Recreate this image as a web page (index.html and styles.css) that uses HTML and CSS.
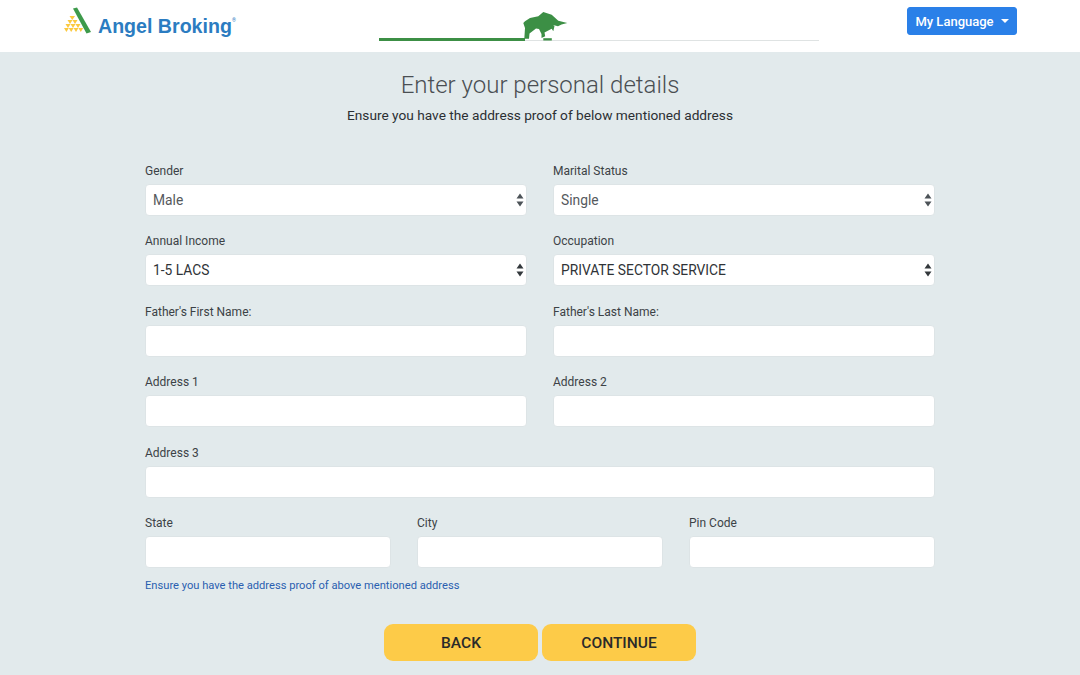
FILE: index.html
```html
<!DOCTYPE html>
<html lang="en">
<head>
<meta charset="utf-8">
<title>Enter your personal details</title>
<link rel="stylesheet" href="styles.css">
</head>
<body>
<header class="topbar">
  <div class="brand">
    <svg class="brand-mark" width="28" height="27" viewBox="0 0 28 27">
      <polygon points="9,1.500 13,0.500 27,25 22.500,26.500" fill="#3d9a4b"/>
      <g fill="#fbc93f">
        <polygon points="5.500,9 11,9 8.250,13"/>
        <polygon points="3.500,13 8.500,13 6,17"/>
        <polygon points="8.500,13 13.500,13 11,17"/>
        <polygon points="1.500,17 6.500,17 4,21"/>
        <polygon points="6.500,17 11.500,17 9,21"/>
        <polygon points="11.500,17 16.500,17 14,21"/>
        <polygon points="0,21 4.800,21 2.400,25"/>
        <polygon points="4.800,21 9.600,21 7.200,25"/>
        <polygon points="9.600,21 14.400,21 12,25"/>
        <polygon points="14.400,21 19.200,21 16.800,25"/>
      </g>
    </svg>
    <span class="brand-name">Angel Broking</span><span class="brand-reg">®</span>
  </div>
  <div class="progress">
    <div class="progress-fill"></div>
    <svg class="bull" width="46" height="30" viewBox="0 0 46 30">
      <path fill="#3c8f45" d="M3 10.300 L1.300 12 L3 17 L2.300 27.700 L7 27.700 L7.500 22.500 L14 17.500 L17 18 L19.500 23 L19.500 27 L23.200 25.300 L22.500 21.500 L29.700 17.700 L31.300 20.300 L32.500 15 L31 14 L36 15.300 L39.500 13.500 L45.300 12 L36.300 9.700 L29.700 3.700 L21.300 1 L16.300 5.300 L8 7 Z"/>
      <rect x="21.300" y="27.200" width="8.500" height="2.300" fill="#3c8f45"/>
    </svg>
  </div>
  <button class="lang-btn" type="button">My Language<span class="caret"></span></button>
</header>

<main class="page">
  <h1 class="title">Enter your personal details</h1>
  <p class="subtitle">Ensure you have the address proof of below mentioned address</p>

  <form class="form">
    <div class="row two">
      <div class="field">
        <label class="label">Gender</label>
        <div class="select-wrap">
          <select class="control select muted"><option>Male</option></select>
          <svg class="arrows" width="8" height="14" viewBox="0 0 8 14"><path d="M4 0.500 L7.500 5.500 H0.500 Z M4 13.500 L0.500 8.500 H7.500 Z" fill="#4d5358"/></svg>
        </div>
      </div>
      <div class="field">
        <label class="label">Marital Status</label>
        <div class="select-wrap">
          <select class="control select muted"><option>Single</option></select>
          <svg class="arrows" width="8" height="14" viewBox="0 0 8 14"><path d="M4 0.500 L7.500 5.500 H0.500 Z M4 13.500 L0.500 8.500 H7.500 Z" fill="#4d5358"/></svg>
        </div>
      </div>
    </div>
    <div class="row two">
      <div class="field">
        <label class="label">Annual Income</label>
        <div class="select-wrap">
          <select class="control select"><option>1-5 LACS</option></select>
          <svg class="arrows" width="8" height="14" viewBox="0 0 8 14"><path d="M4 0.500 L7.500 5.500 H0.500 Z M4 13.500 L0.500 8.500 H7.500 Z" fill="#33383c"/></svg>
        </div>
      </div>
      <div class="field">
        <label class="label">Occupation</label>
        <div class="select-wrap">
          <select class="control select"><option>PRIVATE SECTOR SERVICE</option></select>
          <svg class="arrows" width="8" height="14" viewBox="0 0 8 14"><path d="M4 0.500 L7.500 5.500 H0.500 Z M4 13.500 L0.500 8.500 H7.500 Z" fill="#33383c"/></svg>
        </div>
      </div>
    </div>
    <div class="row two">
      <div class="field"><label class="label">Father's First Name:</label><input class="control" type="text"></div>
      <div class="field"><label class="label">Father's Last Name:</label><input class="control" type="text"></div>
    </div>
    <div class="row two">
      <div class="field"><label class="label">Address 1</label><input class="control" type="text"></div>
      <div class="field"><label class="label">Address 2</label><input class="control" type="text"></div>
    </div>
    <div class="row">
      <div class="field"><label class="label">Address 3</label><input class="control" type="text"></div>
    </div>
    <div class="row three">
      <div class="field"><label class="label">State</label><input class="control" type="text"></div>
      <div class="field"><label class="label">City</label><input class="control" type="text"></div>
      <div class="field"><label class="label">Pin Code</label><input class="control" type="text"></div>
    </div>
    <p class="note">Ensure you have the address proof of above mentioned address</p>
    <div class="actions">
      <button class="action" type="button">BACK</button>
      <button class="action" type="button">CONTINUE</button>
    </div>
  </form>
</main>
</body>
</html>
```
FILE: styles.css
```css
* { box-sizing: border-box; }
html, body { margin: 0; height: 100%; }
body {
  font-family: Roboto, "Liberation Sans", sans-serif;
  background: #e2eaec;
  color: #33383c;
  overflow: hidden;
}
.topbar {
  height: 52px;
  background: #fff;
  display: grid;
  grid-template-columns: 379px 440px 1fr;
  position: relative;
}
.brand {
  display: flex;
  align-items: flex-start;
  padding: 7px 0 0 64px;
}
.brand-mark { flex: none; }
.brand-name {
  font-family: "Liberation Sans", Arial, sans-serif;
  font-weight: 700;
  font-size: 19.600px;
  line-height: 24px;
  color: #2b7cc1;
  margin: 7px 0 0 6px;
  white-space: nowrap;
}
.brand-reg { font-size: 5px; line-height: 8px; color: #2b7cc1; margin-top: 9px; }
.progress {
  height: 41px;
  border-bottom: 1px solid #dfe3e3;
  position: relative;
}
.progress-fill {
  position: absolute;
  left: 0;
  bottom: -1px;
  width: 146px;
  height: 3px;
  background: #3c8f45;
}
.bull { position: absolute; left: 143px; top: 11px; }
.lang-btn {
  justify-self: start;
  margin: 7px 0 0 88px;
  width: 110px;
  height: 28px;
  border: 1px solid #2a80e8;
  border-radius: 3px;
  background: #2a80e8;
  color: #fff;
  font: 500 13px Roboto, sans-serif;
  padding: 0;
  display: flex;
  align-items: center;
  justify-content: center;
}
.caret {
  width: 0;
  height: 0;
  margin-left: 7px;
  border-left: 4px solid transparent;
  border-right: 4px solid transparent;
  border-top: 4px solid #fff;
}
.page { padding-top: 18px; }
.title {
  margin: 0;
  text-align: center;
  font-size: 24px;
  line-height: 30px;
  font-weight: 300;
  color: #4a4f53;
}
.subtitle {
  margin: 4.500px 0 0;
  text-align: center;
  font-size: 13.700px;
  line-height: 20px;
  color: #2b2f33;
}
.form {
  width: 790px;
  margin: 38px 0 0 145px;
}
.row { display: grid; gap: 26px; margin-bottom: 17.500px; }
.two { grid-template-columns: 382px 382px; }
.three { grid-template-columns: 246px 246px 246px; }
.field { display: flex; flex-direction: column; }
.label {
  font-size: 12px;
  line-height: 16px;
  height: 21px;
  color: #3c4246;
}
.select-wrap { position: relative; }
.control {
  display: block;
  width: 100%;
  height: 32px;
  border: 1px solid #dde4e6;
  border-radius: 4px;
  background: #fff;
  padding: 0 7px;
  font: 400 13.800px Roboto, sans-serif;
  color: #2f3337;
  outline: 0;
}
.select { appearance: none; -webkit-appearance: none; }
.muted { color: #55595d; }
.arrows { position: absolute; right: 3px; top: 9px; pointer-events: none; }
.note {
  margin: -7.500px 0 0;
  font-size: 11.150px;
  line-height: 16px;
  color: #2a5fb0;
}
.actions {
  display: flex;
  justify-content: center;
  gap: 4px;
  margin-top: 30px;
}
.action {
  width: 154px;
  height: 37px;
  border: 0;
  border-radius: 9px;
  background: #fdcb48;
  color: #2a2a2a;
  font: 500 15.500px Roboto, sans-serif;
  padding: 0;
}
```
